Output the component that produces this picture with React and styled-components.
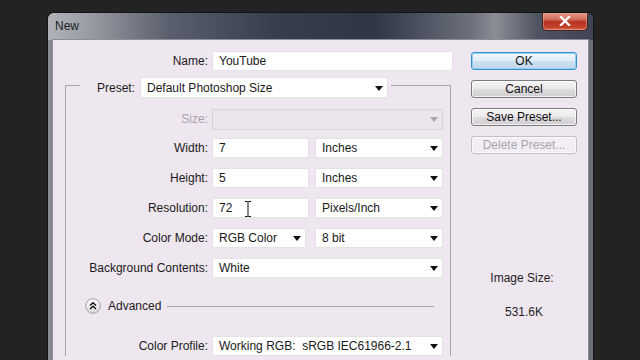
import React from 'react';
import styled, { createGlobalStyle } from 'styled-components';

const GlobalStyle = createGlobalStyle`
	html, body {
		margin: 0;
		padding: 0;
		width: 640px;
		height: 360px;
		overflow: hidden;
		background: #232323;
	}
	body {
		font-family: "Liberation Sans", Arial, sans-serif;
		font-size: 12px;
		color: #1a1a1a;
	}
`;

const Screen = styled.div`
	box-sizing: border-box;
	height: 360px;
	padding: 12px 0 0 47px;
`;

const Window = styled.div`
	box-sizing: border-box;
	width: 547px;
	height: 380px;
	display: flex;
	flex-direction: column;
	border: 1px solid #121418;
	border-bottom: none;
	border-radius: 7px 7px 0 0;
	background: linear-gradient(90deg, #8d9098 0%, #6c707a 2%, #3d4350 30%, #3a404c 70%, #5a5f6a 98%, #6e727c 100%);
	overflow: hidden;
`;

const TitleBar = styled.div`
	height: 27px;
	display: flex;
	justify-content: space-between;
	align-items: flex-start;
	padding: 0 5px 0 7px;
	background: linear-gradient(90deg, #b0b2b8 0%, #9a9ea6 7%, #5a606d 22%, #363d4b 42%, #2f3644 60%, #6d727e 78%, #8a8e97 82%, #4d5360 90%, #3f4552 100%);
`;

const Title = styled.span`
	margin-top: 6px;
	font-size: 12px;
	color: #1e1f22;
`;

const CloseButton = styled.div`
	width: 46px;
	height: 19px;
	box-sizing: border-box;
	margin-top: -1px;
	display: flex;
	align-items: center;
	justify-content: center;
	border: 1px solid #4a2622;
	border-top: none;
	border-radius: 0 0 5px 5px;
	background: linear-gradient(180deg, #e3a193 0%, #d2705e 40%, #b8321f 55%, #c5432e 85%, #d8735f 100%);
	box-shadow: inset 0 0 0 1px rgba(255, 200, 190, 0.35);
`;

const Frame = styled.div`
	flex: 1;
	display: flex;
	padding: 0 5px;
`;

const Content = styled.div`
	flex: 1;
	display: flex;
	background: #efe7f0;
	box-shadow: 0 0 0 1px #8c8f98;
`;

const LeftColumn = styled.div`
	width: 402px;
	padding-top: 11px;
	display: flex;
	flex-direction: column;
`;

const RightColumn = styled.div`
	width: 106px;
	margin-left: 16px;
	padding-top: 12px;
	display: flex;
	flex-direction: column;
	gap: 10px;
`;

const Row = styled.div`
	display: flex;
	align-items: center;
	gap: 4px;
	height: 20px;
	margin-top: ${p => p.$top || 0}px;
`;

const Label = styled.span`
	width: ${p => p.$width}px;
	text-align: right;
	white-space: nowrap;
	color: ${p => (p.$disabled ? '#a9a3ab' : '#1a1a1a')};
`;

const TextInput = styled.div`
	position: relative;
	box-sizing: border-box;
	width: ${p => p.$width}px;
	height: 20px;
	padding-left: 6px;
	display: flex;
	align-items: center;
	background: #ffffff;
	border: 1px solid #e6e0e8;
`;

const Select = styled.div`
	position: relative;
	box-sizing: border-box;
	width: ${p => p.$width}px;
	height: ${p => p.$height || 20}px;
	padding-left: 6px;
	display: flex;
	align-items: center;
	white-space: nowrap;
	background: ${p => (p.$disabled ? '#ebe6ec' : '#ffffff')};
	border: 1px solid ${p => (p.$disabled ? '#d6d0d8' : '#e6e0e8')};
	&::after {
		content: '';
		position: absolute;
		right: 4px;
		top: 50%;
		margin-top: -2px;
		border-left: 4px solid transparent;
		border-right: 4px solid transparent;
		border-top: 5px solid ${p => (p.$disabled ? '#a8a4aa' : '#111111')};
	}
`;

const Pair = styled.div`
	display: flex;
	gap: ${p => p.$gap || 6}px;
`;

const Group = styled.fieldset`
	margin: 1px 0 0 12px;
	padding: 0 6px 0 0;
	width: 386px;
	box-sizing: border-box;
	border: 1px solid #aaa4ac;
	border-bottom: none;
	min-width: 0;
`;

const Legend = styled.legend`
	margin-left: 14px;
	padding: 5px 3px 0 17px;
	display: flex;
	align-items: center;
	gap: 5px;
`;

const AdvancedRow = styled.div`
	display: flex;
	align-items: center;
	height: 20px;
	margin-top: 18px;
	padding: 0 10px 0 19px;
`;

const AdvancedText = styled.span`
	margin: 0 6px 0 7px;
`;

const Rule = styled.div`
	flex: 1;
	height: 1px;
	background: #aaa4ac;
`;

const Button = styled.div`
	box-sizing: border-box;
	height: 18px;
	display: flex;
	align-items: center;
	justify-content: center;
	border-radius: 3px;
	font-size: 12px;
	border: 1px solid ${p => (p.$primary ? '#3a8fcf' : p.$disabled ? '#c4bdc6' : '#7d7a80')};
	color: ${p => (p.$disabled ? '#a9a3ab' : '#111111')};
	background: ${p =>
		p.$disabled
			? '#f3eef4'
			: p.$primary
			? 'linear-gradient(180deg, #eef6fb 0%, #e2eef7 50%, #cbdff0 52%, #c2d8ec 100%)'
			: 'linear-gradient(180deg, #f6f4f6 0%, #eceaec 50%, #dedbde 52%, #d2cfd2 100%)'};
	box-shadow: ${p => (p.$primary ? 'inset 0 0 0 1px #8fd0f4' : 'inset 0 0 0 1px rgba(255,255,255,0.7)')};
`;

const SizeInfo = styled.div`
	margin-top: 107px;
	padding-right: 4px;
	text-align: center;
	line-height: 14px;
	color: #1e1e1e;
`;

const SizeValue = styled.div`
	margin-top: 10px;
	text-align: center;
	line-height: 14px;
	color: #1e1e1e;
`;

const Cursor = styled.svg`
	position: absolute;
	left: 31px;
	top: 2px;
`;

const ToggleIcon = () => (
	<svg width="16" height="16" viewBox="0 0 16 16">
		<defs>
			<linearGradient id="tg" x1="0" y1="0" x2="0" y2="1">
				<stop offset="0" stopColor="#ffffff" />
				<stop offset="1" stopColor="#ddd8de" />
			</linearGradient>
		</defs>
		<circle cx="8" cy="8" r="7.3" fill="url(#tg)" stroke="#a19ca3" strokeWidth="1" />
		<path d="M5 7.5 L8 4.8 L11 7.5 M5 11 L8 8.3 L11 11" fill="none" stroke="#111" strokeWidth="1.4" />
	</svg>
);

const CloseGlyph = () => (
	<svg width="12" height="10" viewBox="0 0 12 10">
		<path d="M2 1 L10 9 M10 1 L2 9" stroke="#ffffff" strokeWidth="2.4" strokeLinecap="square" />
	</svg>
);

const App = () => (
	<Screen>
		<GlobalStyle />
		<Window>
			<TitleBar>
				<Title>New</Title>
				<CloseButton>
					<CloseGlyph />
				</CloseButton>
			</TitleBar>
			<Frame>
				<Content>
					<LeftColumn>
						<Row>
							<Label $width={155}>Name:</Label>
							<TextInput $width={241}>YouTube</TextInput>
						</Row>
						<Group>
							<Legend>
								<span>Preset:</span>
								<Select $width={248} $height={21}>Default Photoshop Size</Select>
							</Legend>
							<Row $top={11}>
								<Label $width={142} $disabled>Size:</Label>
								<Select $width={231} $height={21} $disabled />
							</Row>
							<Row $top={9}>
								<Label $width={142}>Width:</Label>
								<Pair>
									<TextInput $width={97}>7</TextInput>
									<Select $width={128}>Inches</Select>
								</Pair>
							</Row>
							<Row $top={10}>
								<Label $width={142}>Height:</Label>
								<Pair>
									<TextInput $width={97}>5</TextInput>
									<Select $width={128}>Inches</Select>
								</Pair>
							</Row>
							<Row $top={10}>
								<Label $width={142}>Resolution:</Label>
								<Pair>
									<TextInput $width={97}>
										72
										<Cursor width="8" height="16" viewBox="0 0 8 16">
											<path d="M1 0.5 H3.5 L4 1.5 L4.5 0.5 H7 M4 1.5 V14.5 M1 15.5 H3.5 L4 14.5 L4.5 15.5 H7" fill="none" stroke="#111" strokeWidth="1" />
										</Cursor>
									</TextInput>
									<Select $width={128}>Pixels/Inch</Select>
								</Pair>
							</Row>
							<Row $top={10}>
								<Label $width={142}>Color Mode:</Label>
								<Pair $gap={9}>
									<Select $width={94}>RGB Color</Select>
									<Select $width={128}>8 bit</Select>
								</Pair>
							</Row>
							<Row $top={10}>
								<Label $width={142}>Background Contents:</Label>
								<Select $width={231}>White</Select>
							</Row>
							<AdvancedRow>
								<ToggleIcon />
								<AdvancedText>Advanced</AdvancedText>
								<Rule />
							</AdvancedRow>
							<Row $top={20}>
								<Label $width={142}>Color Profile:</Label>
								<Select $width={231}>Working RGB:&nbsp; sRGB IEC61966-2.1</Select>
							</Row>
						</Group>
					</LeftColumn>
					<RightColumn>
						<Button $primary>OK</Button>
						<Button>Cancel</Button>
						<Button>Save Preset...</Button>
						<Button $disabled>Delete Preset...</Button>
						<SizeInfo>Image Size:</SizeInfo>
						<SizeValue>531.6K</SizeValue>
					</RightColumn>
				</Content>
			</Frame>
		</Window>
	</Screen>
);

export default App;
